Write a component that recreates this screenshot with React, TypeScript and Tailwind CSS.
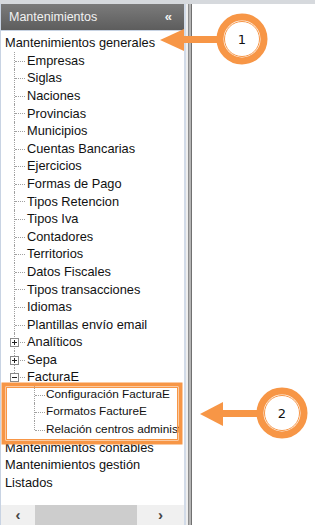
import React from 'react';

type Item = { label: string; level: number; box?: '+' | '-'; last?: boolean };

const items: Item[] = [
  { label: 'Mantenimientos generales', level: 0 },
  { label: 'Empresas', level: 1 },
  { label: 'Siglas', level: 1 },
  { label: 'Naciones', level: 1 },
  { label: 'Provincias', level: 1 },
  { label: 'Municipios', level: 1 },
  { label: 'Cuentas Bancarias', level: 1 },
  { label: 'Ejercicios', level: 1 },
  { label: 'Formas de Pago', level: 1 },
  { label: 'Tipos Retencion', level: 1 },
  { label: 'Tipos Iva', level: 1 },
  { label: 'Contadores', level: 1 },
  { label: 'Territorios', level: 1 },
  { label: 'Datos Fiscales', level: 1 },
  { label: 'Tipos transacciones', level: 1 },
  { label: 'Idiomas', level: 1 },
  { label: 'Plantillas envío email', level: 1 },
  { label: 'Analíticos', level: 1, box: '+' },
  { label: 'Sepa', level: 1, box: '+' },
  { label: 'FacturaE', level: 1, box: '-', last: true },
  { label: 'Configuración FacturaE', level: 2 },
  { label: 'Formatos FactureE', level: 2 },
  { label: 'Relación centros administ', level: 2, last: true },
  { label: 'Mantenimientos contables', level: 0 },
  { label: 'Mantenimientos gestión', level: 0 },
  { label: 'Listados', level: 0 },
];

const dot = 'border-dotted border-[#a0a0a0]';

function Row({ item }: { item: Item }) {
  return (
    <div className="relative h-[17.6px] flex items-center whitespace-nowrap">
      {item.level === 1 && (
        <>
          <div className={`absolute left-[13px] top-0 w-0 border-l ${dot} ${item.last ? 'h-[9px]' : 'h-full'}`} />
          <div className={`absolute left-[14px] top-[9px] w-[10px] h-0 border-t ${dot}`} />
        </>
      )}
      {item.level === 2 && (
        <>
          <div className={`absolute left-[33px] top-0 w-0 border-l ${dot} ${item.last ? 'h-[9px]' : 'h-full'}`} />
          <div className={`absolute left-[34px] top-[9px] w-[10px] h-0 border-t ${dot}`} />
        </>
      )}
      {item.box && (
        <div className="absolute left-[9px] top-[5px] w-[9px] h-[9px] border border-[#8a8a8a] bg-white flex items-center justify-center">
          <div className="absolute w-[5px] h-px bg-[#222]" />
          {item.box === '+' && <div className="absolute w-px h-[5px] bg-[#222]" />}
        </div>
      )}
      <span
        className={`text-[#111] ${
          item.level === 0
            ? 'pl-[4px] text-[12.8px]'
            : item.level === 1
            ? 'pl-[26px] text-[12.8px]'
            : 'pl-[45px] text-[11.8px]'
        }`}
      >
        {item.label}
      </span>
    </div>
  );
}

function Annotations() {
  const orange = '#f79646';
  return (
    <svg className="absolute left-0 top-0 pointer-events-none" width="315" height="525" viewBox="0 0 315 525">
      {/* arrow 1 */}
      <rect x="182" y="36" width="40" height="7" fill={orange} />
      <polygon points="160,40 184,29 184,51" fill={orange} />
      <circle cx="242" cy="39" r="22" fill="white" stroke={orange} strokeWidth="7" />
      <circle cx="242" cy="39" r="17.5" fill="none" stroke={orange} strokeWidth="1" />
      <text x="242" y="44" textAnchor="middle" fontSize="13" fontFamily="'DejaVu Sans', sans-serif" fill="#111">1</text>

      {/* box 2 */}
      <rect x="3.5" y="384.5" width="177" height="58" fill="none" stroke={orange} strokeWidth="4" />
      <rect x="6.5" y="387.5" width="171" height="52" fill="none" stroke={orange} strokeWidth="1" />

      {/* arrow 2 */}
      <rect x="220" y="410" width="40" height="7" fill={orange} />
      <polygon points="200,414 223,402 223,426" fill={orange} />
      <circle cx="282" cy="413" r="22" fill="white" stroke={orange} strokeWidth="7" />
      <circle cx="282" cy="413" r="17.5" fill="none" stroke={orange} strokeWidth="1" />
      <text x="282" y="418" textAnchor="middle" fontSize="13" fontFamily="'DejaVu Sans', sans-serif" fill="#111">2</text>
    </svg>
  );
}

export default function App() {
  return (
    <div className="relative w-[315px] h-[525px] bg-white overflow-hidden font-['Liberation_Sans',Arial,sans-serif]">
      <div className="h-[4px] bg-[#d6d9dd]" />
      <div className="flex h-[521px]">
        {/* sidebar */}
        <div className="w-[184px] flex flex-col border-l border-[#c8d3e3]">
          <div className="h-[26px] flex items-center justify-between pl-[8px] pr-[12px] bg-gradient-to-b from-[#7b7b7b] to-[#5d5d5d] text-[#f2f2f2]">
            <span className="text-[12.5px]">Mantenimientos</span>
            <span className="text-[13px] font-bold">«</span>
          </div>
          <div className="flex-1 border-t border-[#c8d3e3] bg-white pt-[3px] overflow-hidden">
            {items.map((it) => (
              <Row key={it.label} item={it} />
            ))}
          </div>
          <div className="h-[20px] bg-[#f0f0f0] flex items-center">
            <span className="w-[34px] text-center text-[15px] font-bold text-[#444]">‹</span>
            <div className="w-[102px] h-full bg-[#cdcdcd]" />
            <span className="flex-1 text-center text-[15px] font-bold text-[#444]">›</span>
          </div>
        </div>
        {/* splitter */}
        <div className="flex">
          <div className="w-[2px] bg-[#d2dbe8]" />
          <div className="w-[2px] bg-[#eeeeee]" />
          <div className="w-px bg-[#8d8d8d]" />
          <div className="w-[2px] bg-[#b5b5b5]" />
          <div className="w-px bg-[#707070]" />
        </div>
        <div className="flex-1 bg-white" />
      </div>
      <Annotations />
    </div>
  );
}
